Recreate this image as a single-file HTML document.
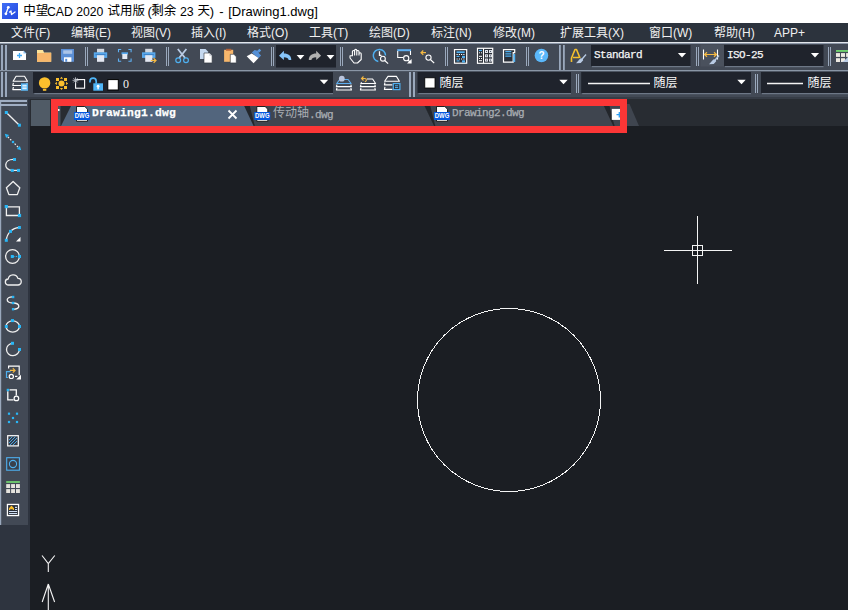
<!DOCTYPE html>
<html lang="zh-CN"><head><meta charset="utf-8"><title>ZWCAD</title>
<style>
*{box-sizing:border-box;margin:0;padding:0}
html,body{width:848px;height:610px;overflow:hidden;background:#1b1e23}
body{position:relative;font-family:"Liberation Sans","Noto Sans CJK SC",sans-serif;font-size:12px;color:#eee}
.abs,#app *{position:absolute}
#app{position:absolute;left:0;top:0;width:848px;height:610px;overflow:hidden}
#title{left:0;top:0;width:848px;height:23px;background:#fff}
#title .tt{left:23px;top:2px;width:320px;height:19px;color:#000}
#title .tt span{top:0;line-height:19px;white-space:pre;transform-origin:0 50%}
#title .tt .c{font-size:12.5px}
#title .tt .l{font-size:13px}
#title .t{left:23px;top:2px;font-size:13px;line-height:19px;color:#000;white-space:nowrap;transform-origin:0 50%;transform:scaleX(0.972)}
#menu{left:0;top:23px;width:848px;height:19px;background:#2c333d}
#menu span{top:1px;line-height:19px;font-size:12px;color:#f0f0f0;white-space:nowrap;transform-origin:0 50%}
#tbline1{left:0;top:42px;width:848px;height:2px;background:linear-gradient(#e2e6ec 0 50%,#8d98a8 50% 100%)}
#tb1{left:0;top:44px;width:848px;height:26px;background:#424955}
#tbline2{left:0;top:70px;width:848px;height:2px;background:linear-gradient(#8a96a6 0 50%,#4d5562 50% 100%)}
#tb2{left:0;top:72px;width:848px;height:25px;background:#424955}
.grip{width:2px;background:#5e6877}
.sep{width:1px;background:#6b7583}
.dd{background:#1f232b;border-bottom:2px solid #4c5563}
.mono{font-family:"Liberation Mono",monospace;font-size:10.5px;color:#f6f6f6;white-space:nowrap;letter-spacing:-0.3px;-webkit-text-stroke:0.25px currentColor}
.caret{width:0;height:0;border-left:4.5px solid transparent;border-right:4.5px solid transparent;border-top:5px solid #fff}
.cjk{font-size:12px;color:#fafafa;white-space:nowrap;line-height:14px}
#gap{left:0;top:97px;width:848px;height:2px;background:#363c46}
#tabbar{left:30px;top:99px;width:818px;height:27px;background:#282c32}
#left{left:0;top:99px;width:27.5px;height:426px;background:#424955}
#leftside{left:0;top:99px;width:30px;height:513px;background:#2e343f}
svg{overflow:visible}
</style></head><body><div id="app">

<div id="title"><svg style="left:2px;top:3px" width="16" height="16" viewBox="0 0 16 16"><defs><linearGradient id="ig" x1="0" y1="0" x2="1" y2="1"><stop offset="0" stop-color="#3f6ef5"/><stop offset="1" stop-color="#2548e0"/></linearGradient></defs><rect width="16" height="16" fill="url(#ig)"/><path d="M3.900 10.800L6.300 4.300M7.600 9L9 8L9.500 11.500L13 9" stroke="#fff" stroke-width="1.300" fill="none" stroke-linecap="round" stroke-linejoin="round"/><circle cx="3.900" cy="10.800" r="1.400" fill="#fff"/><circle cx="6.300" cy="4.300" r="1.400" fill="#fff"/></svg>
<span class="tt" id="ttext"><span class="c" style="left:0.3px">中望</span><span class="l" style="left:24.4px;transform:scaleX(0.94)">CAD 2020 </span><span class="c" style="left:84.400px">试用版 </span><span class="l" style="left:124.600px">(</span><span class="c" style="left:128.300px">剩余 </span><span class="l" style="left:156.9px;transform:scaleX(0.95)">23 </span><span class="c" style="left:174.5px">天</span><span class="l" style="left:186.7px">) </span><span class="l" style="left:196.2px">- </span><span class="l" style="left:205.2px">[Drawing1.dwg]</span></span></div>

<div id="menu">
<span style="left:11px">文件(F)</span><span style="left:71px">编辑(E)</span><span style="left:131px">视图(V)</span><span style="left:191px">插入(I)</span><span style="left:247px">格式(O)</span><span style="left:309px">工具(T)</span><span style="left:369px">绘图(D)</span><span style="left:431px">标注(N)</span><span style="left:493px">修改(M)</span><span style="left:560px">扩展工具(X)</span><span style="left:649px">窗口(W)</span><span style="left:714px">帮助(H)</span><span style="left:774px">APP+</span>
</div>
<div id="tbline1"></div>
<div id="tb1"><svg style="left:0;top:0" width="848" height="26" viewBox="0 44 848 26">
<rect x="1" y="45" width="2" height="25" fill="#9aa8bc"/><rect x="5" y="45" width="2" height="25" fill="#9aa8bc"/>
<path d="M12.5 50.5h11l3 3v7h-14z" fill="#fff" stroke="#2d323b" stroke-width="0.8"/><path d="M23.500 50.500v3h3z" fill="#8fc4f2"/><path d="M19.500 53v5M17 55.500h5" stroke="#3fa9f5" stroke-width="1.300"/>
<path d="M37 50h6l1 2.500h7.200v9.300h-14.200z" fill="#fbe29a"/><rect x="37" y="53" width="14.200" height="8.800" fill="#f7b76c"/>
<path d="M61 49h13v12.800h-11l-2-2z" fill="#5b8fd6"/><rect x="63.200" y="50.300" width="9" height="3.500" fill="#aac4e8"/><rect x="64" y="57.300" width="7.400" height="4.500" fill="#fff"/><rect x="65.200" y="58.800" width="2" height="3" fill="#5b8fd6"/>
<path d="M85.5 47V66M87.5 47V66" stroke="#9aa8bc" stroke-width="1"/>
<rect x="97.0" y="48.800" width="7.200" height="4" fill="#d3d8e0"/><rect x="93.8" y="52.300" width="13.400" height="5.600" fill="#58a8ec"/><rect x="95.39999999999999" y="54" width="10.200" height="1.300" fill="#3f83c8"/><rect x="97.0" y="55.200" width="7.200" height="6.600" fill="#e4e8f2"/>
<path d="M118.500 52.200v-2.700h2.700M128.400 49.500h2.700v2.700M131.100 58.600v2.700h-2.700M121.200 61.300h-2.700v-2.700" stroke="#5fb0f2" stroke-width="1.100" fill="none"/><rect x="121.500" y="52.300" width="6.500" height="2.200" fill="#58a8ec"/><rect x="122.300" y="54" width="5" height="5" fill="#e4e8f2"/>
<rect x="145.2" y="48.800" width="7.200" height="4" fill="#d3d8e0"/><rect x="142" y="52.300" width="13.400" height="5.600" fill="#58a8ec"/><rect x="143.6" y="54" width="10.200" height="1.300" fill="#3f83c8"/><rect x="145.2" y="55.200" width="7.200" height="6.600" fill="#e4e8f2"/>
<path d="M150.800 60.500h5M153.600 58.200l2.400 2.300l-2.400 2.300" stroke="#f5b942" stroke-width="1.200" fill="none"/>
<path d="M166.5 47V66M168.5 47V66" stroke="#9aa8bc" stroke-width="1"/>
<path d="M177.800 49l7.300 9M186.400 49l-7.300 9" stroke="#b9cbe4" stroke-width="1.800"/><circle cx="178.200" cy="60.300" r="2.400" fill="none" stroke="#4fb0f0" stroke-width="1.200"/><circle cx="186" cy="60.300" r="2.400" fill="none" stroke="#4fb0f0" stroke-width="1.200"/>
<path d="M200 49h5.500l2.700 2.700v7.200h-8.200z" fill="#c5d9f0"/><path d="M204 53h5.400l2.700 2.700v7.200h-8.100z" fill="#fff" stroke="#2d323b" stroke-width="0.600"/><path d="M209.400 53v2.700h2.700z" fill="#c9ced6"/>
<rect x="224.100" y="49.800" width="9.100" height="12" fill="#f7b76c"/><rect x="226" y="48.800" width="5.200" height="1.900" fill="#b5623a"/><path d="M230.300 54.300h3.600l2.400 2.400v6.200h-6z" fill="#fff" stroke="#2d323b" stroke-width="0.600"/>
<path d="M259.400 48.700l1.800 1.700l-2 2.200l-1.800-1.800z" fill="#5a9be0"/><path d="M251.800 52.600L254.600 49.900L258.500 51L258.900 53.200L261.100 55.500L258.400 58.200Z" fill="#5590d6"/><path d="M251.700 53.500L258.500 58L253.500 63.300L246.700 56.300Z" fill="#fff"/>
<path d="M271.5 47V66M273.5 47V66" stroke="#9aa8bc" stroke-width="1"/>
<rect x="276" y="45" width="60" height="22.500" fill="#1f232c"/>
<path transform="translate(279,50.800)" d="M0 4.900L4.900 0V2.700C9.500 2.700 12.300 5 12.300 9.200L9.700 9.200C9.200 7.300 8 6.500 4.900 6.500V9.200Z" fill="#86c4fa"/>
<polygon points="296.65,54.900000000000006 304.35,54.900000000000006 300.5,59.5" fill="#fff"/>
<path transform="translate(321.100,50.800) scale(-1,1)" d="M0 4.900L4.900 0V2.700C9.500 2.700 12.300 5 12.300 9.200L9.700 9.200C9.200 7.300 8 6.500 4.900 6.500V9.200Z" fill="#b0b0b0"/>
<polygon points="326.65,54.900000000000006 334.35,54.900000000000006 330.5,59.5" fill="#fff"/>
<path d="M340.5 47V66M342.5 47V66" stroke="#9aa8bc" stroke-width="1"/>
<path d="M350 55.800H352.400V51.600Q352.400 50.500 353.500 50.500Q354.600 50.500 354.600 51.600V50.500Q354.600 49.400 355.700 49.400Q356.800 49.400 356.800 50.500V51.600Q356.800 50.500 357.900 50.500Q359 50.500 359 51.600V53.800Q359 52.800 360.100 52.800Q361.200 52.800 361.200 53.800V59.500L357.500 63H354L350 58ZM354.600 51.600V55.500M356.800 51.600V55.500M359 53.800V55.500" fill="none" stroke="#fff" stroke-width="1.100" stroke-linejoin="round"/>
<path d="M385.500 55.400A6.100 6.100 0 1 0 378.300 61.500" fill="none" stroke="#4fb0f0" stroke-width="1.500"/><path d="M379.500 51.200v4.200h2" stroke="#fff" stroke-width="1.300" fill="none"/><circle cx="382.900" cy="58.700" r="2.400" fill="#424955" stroke="#fff" stroke-width="1.100"/><path d="M384.700 60.500l3.400 3.100" stroke="#fff" stroke-width="1.200"/><rect x="397.200" y="49.200" width="13.800" height="2" fill="#5fb0f2"/><path d="M397.700 51v6.500h5.500M410.500 51v4" stroke="#fff" stroke-width="1.100" fill="none"/><circle cx="406.200" cy="58.200" r="2.600" fill="none" stroke="#fff" stroke-width="1.100"/><path d="M408 60l2 2" stroke="#fff" stroke-width="1.200"/><path d="M411.600 59v4.600h-4.600z" fill="#fff"/>
<path d="M421 52.700h5M423.300 50.500l-2.300 2.200l2.300 2.200" stroke="#f5b942" stroke-width="1.200" fill="none"/><circle cx="428.500" cy="57.600" r="2.600" fill="none" stroke="#fff" stroke-width="1.100"/><path d="M430.400 59.500l3.800 3.600" stroke="#fff" stroke-width="1.200"/>
<path d="M445.5 47V66M447.5 47V66" stroke="#9aa8bc" stroke-width="1"/>
<rect x="454.500" y="49.600" width="12.200" height="13.600" fill="#2a2f38" stroke="#fff" stroke-width="1.200"/><rect x="456.500" y="51.300" width="8.200" height="1.800" fill="#4fb0f0"/><g fill="#4fb0f0"><rect x="456.500" y="55.800" width="3" height="1.200"/><rect x="462" y="55.800" width="3" height="2.200"/><rect x="456.500" y="60.300" width="3" height="1.200"/><rect x="462" y="60.300" width="3" height="2.200"/></g><g fill="#fff"><rect x="456.500" y="54" width="1.200" height="1"/><rect x="458.800" y="54" width="1.200" height="1"/><rect x="461" y="54" width="1.200" height="1"/><rect x="463.300" y="54" width="1.200" height="1"/><rect x="456.500" y="58.500" width="1.200" height="1"/><rect x="458.800" y="58.500" width="1.200" height="1"/><rect x="461" y="58.500" width="1.200" height="1"/><rect x="463.300" y="58.500" width="1.200" height="1"/></g>
<rect x="477.500" y="48.300" width="15.200" height="15" fill="#2a2f38" stroke="#fff" stroke-width="1.200"/><path d="M483.500 48.300v15" stroke="#fff" stroke-width="1.100"/><rect x="479" y="49.800" width="3" height="1.300" fill="#4fb0f0"/><g fill="#fff"><rect x="479" y="52.300" width="1" height="1"/><rect x="481" y="52.300" width="1" height="1"/><rect x="479" y="55.800" width="3" height="1"/><rect x="479" y="58" width="1" height="1"/><rect x="481" y="58" width="1" height="1"/><rect x="479" y="60.200" width="3" height="1"/></g><g fill="#dfe3ea"><rect x="485" y="50" width="3" height="3"/><rect x="489" y="50" width="3" height="3"/><rect x="485" y="54.300" width="3" height="3"/><rect x="489" y="54.300" width="3" height="3"/><rect x="485" y="58.600" width="3" height="3"/><rect x="489" y="58.600" width="3" height="3"/></g><g fill="#4a5261"><rect x="486" y="51" width="1" height="1"/><rect x="490" y="51" width="1" height="1"/><rect x="486" y="55.300" width="1" height="1"/><rect x="490" y="55.300" width="1" height="1"/><rect x="486" y="59.600" width="1" height="1"/><rect x="490" y="59.600" width="1" height="1"/></g>
<path d="M503.500 49.600h11.200v3h-1.500v9.600h-9.700z" fill="#2a2f38" stroke="#fff" stroke-width="1.200"/><path d="M505.300 51.700h6M505.300 53.900h6M505.300 56.100h6" stroke="#4fb0f0" stroke-width="1.200"/><rect x="513.400" y="54" width="1.800" height="8" fill="#4fb0f0"/>
<path d="M526.5 47V66M528.5 47V66" stroke="#9aa8bc" stroke-width="1"/>
<circle cx="541.450" cy="55.450" r="6.800" fill="#5ab7fa"/><text x="541.500" y="59.200" font-family="Liberation Sans, sans-serif" font-weight="bold" font-size="10" fill="#fff" text-anchor="middle">?</text>
<rect x="559" y="45" width="1.800" height="25" fill="#9aa8bc"/><rect x="563" y="45" width="1.800" height="25" fill="#9aa8bc"/>
<path d="M571.500 62v-4l3.500-8.500h1.500l3.500 8.500M573 57.500h6" fill="none" stroke="#f5c02d" stroke-width="1.600" stroke-linejoin="round"/><path d="M585.600 54l.9.900l-3.600 4.300l.3 1l-2.500 2.800l-4.700.3l4.300-4.700l1.500-.3z" fill="#b9cbe4"/>
<rect x="591" y="45" width="99.500" height="21" fill="#1f232c"/><rect x="592" y="66" width="98.500" height="1.200" fill="#6d7786"/>
<polygon points="677.9,52.900000000000006 686.1,52.900000000000006 682,57.5" fill="#fff"/>
<path d="M696.5 47V66M698.5 47V66" stroke="#9aa8bc" stroke-width="1"/>
<rect x="700.500" y="44.500" width="23.500" height="22" fill="#4a515d"/><path d="M703.500 49.500v10M717.500 49.500v10" stroke="#fff" stroke-width="1.100"/><path d="M704.500 54.500h12M707 52.300l-2.500 2.200l2.500 2.200M714 52.300l2.500 2.200l-2.500 2.200" stroke="#f5b942" stroke-width="1.200" fill="none"/><path d="M718.600 55l.9.900l-3.600 4.300l.3 1l-2.500 2.800l-4.700.3l4.300-4.700l1.500-.3z" fill="#b9cbe4"/>
<rect x="724" y="45" width="99.500" height="21" fill="#1f232c"/><rect x="725" y="66" width="98.500" height="1.200" fill="#6d7786"/>
<polygon points="810.9,52.900000000000006 819.1,52.900000000000006 815,57.5" fill="#fff"/>
<path d="M828.5 47V66M830.5 47V66" stroke="#9aa8bc" stroke-width="1"/>
<rect x="836" y="50" width="14" height="1.900" fill="#6fcf6f"/><g fill="#ece9e2"><rect x="836" y="53.100" width="4" height="3.800"/><rect x="841" y="53.100" width="4" height="3.800"/><rect x="846.100" y="53.100" width="4" height="3.800"/><rect x="836" y="58.200" width="4" height="3.800"/><rect x="841" y="58.200" width="4" height="3.800"/></g><path d="M848 57l-4.500 4.200l-1.800 .900h6.300z" fill="#b9cbe4"/></svg>
<span class="mono" style="left:594px;top:5px;font-size:11px;letter-spacing:-0.6px;line-height:12px" id="std">Standard</span>
<span class="mono" style="left:727px;top:5px;font-size:11px;letter-spacing:-0.6px;line-height:12px" id="iso">ISO-25</span></div>
<div id="tbline2"></div>
<div id="tb2"><svg style="left:0;top:0" width="848" height="25" viewBox="0 72 848 25">
<rect x="1" y="72" width="2" height="25" fill="#9aa8bc"/><rect x="5" y="72" width="2" height="25" fill="#9aa8bc"/>
<path d="M16.1 76.3h8.400l3 5h-14.400z" fill="none" stroke="#fff" stroke-width="1.100" stroke-linejoin="round"/><path d="M13.4 82.89999999999999l-.6 2.600h14.600l-.6-2.600M13.4 87.0l-.6 2.600h14.600l-.6-2.600" fill="none" stroke="#fff" stroke-width="1.100" stroke-linejoin="round"/>
<rect x="21" y="83.300" width="7" height="7.400" fill="#4fb0f0"/><path d="M22.300 85.300h4.400M22.300 87h4.400M22.300 88.700h4.400" stroke="#fff" stroke-width="1"/>
<rect x="33" y="72" width="300" height="21" fill="#1f232c"/><rect x="34.300" y="93" width="298.700" height="1.200" fill="#6d7786"/>
<circle cx="44.600" cy="82.900" r="5.700" fill="#fbc02d"/><rect x="42.900" y="89" width="3.400" height="1.800" fill="#fbc02d"/>
<g fill="#fbc02d"><circle cx="61.500" cy="83.400" r="3"/><rect x="56" y="78" width="3" height="3"/><rect x="64" y="78" width="3" height="3"/><rect x="56" y="86" width="3" height="3"/><rect x="64" y="86" width="3" height="3"/><path d="M61.500 76.800l1.600 2h-3.200zM61.500 90l1.600-2h-3.200zM54.900 83.400l2-1.600v3.200zM68.100 83.400l-2-1.600v3.200z"/></g>
<rect x="75.600" y="79.600" width="9" height="8.600" fill="none" stroke="#fff" stroke-width="1.100"/><path d="M72.500 80.300h6M75.500 77.300v6M73.400 78.200l4.200 4.200M77.600 78.200l-4.200 4.200" stroke="#b8bcc4" stroke-width="0.900"/>
<path d="M90 82.500v-1.300a3.100 3.100 0 0 1 6.200 0v2.500" fill="none" stroke="#4fb5f7" stroke-width="1.700"/><rect x="93.300" y="83.300" width="9.700" height="7.400" fill="#4fb5f7"/><circle cx="98.100" cy="86.200" r="1.400" fill="#fff"/><rect x="97.400" y="86.500" width="1.400" height="2.800" fill="#fff"/>
<rect x="107.800" y="79.600" width="10.500" height="10.400" fill="#fff" stroke="#000" stroke-width="1"/>
<polygon points="319.8,79.8 328.2,79.8 324,84.2" fill="#fff"/>
<path d="M339.700 79.500h8.400l3 4h-14.400z" fill="none" stroke="#5fb0f2" stroke-width="1.100" stroke-linejoin="round"/><path d="M337 84.600l-.6 2h15l-.6-2M337 88l-.6 2h15l-.6-2" fill="none" stroke="#fff" stroke-width="1.100" stroke-linejoin="round"/><circle cx="341.800" cy="78.700" r="2.900" fill="#b9c4dc"/>
<path d="M367 79h5.600l3 4.500h-14.800l.8-1.200" fill="none" stroke="#fff" stroke-width="1.100" stroke-linejoin="round"/><path d="M361 84.600l-.6 2h15l-.6-2M361 88l-.6 2h15l-.6-2" fill="none" stroke="#fff" stroke-width="1.100" stroke-linejoin="round"/><path d="M361.500 78.500h3.300a1.600 1.600 0 0 1 0 3.200M363.500 76.500l-2 2l2 2" fill="none" stroke="#f5b942" stroke-width="1.100"/>
<path d="M388 76.400h8.400l3 4.800h-14.800z" fill="none" stroke="#fff" stroke-width="1.100" stroke-linejoin="round"/><path d="M385 82.500l-.6 2.400h8M385 86.800l-.6 2.600h8" fill="none" stroke="#fff" stroke-width="1.100" stroke-linejoin="round"/><rect x="393.300" y="83.600" width="6.600" height="6" fill="#2a2f38" stroke="#4fb0f0" stroke-width="1.200"/><path d="M395 85.800h3.200M395 87.600h3.200" stroke="#4fb0f0" stroke-width="1"/>
<rect x="409" y="72" width="2" height="25" fill="#9aa8bc"/><rect x="413" y="72" width="2" height="25" fill="#9aa8bc"/>
<rect x="417.500" y="72" width="153.500" height="21" fill="#1f232c"/><rect x="418.500" y="93" width="152.500" height="1.200" fill="#6d7786"/>
<rect x="424.800" y="77.800" width="10.200" height="10.200" fill="#fff" stroke="#000" stroke-width="0.800"/>
<polygon points="559.3,79.8 567.7,79.8 563.5,84.2" fill="#fff"/>
<path d="M576.5 74V93M578.5 74V93" stroke="#9aa8bc" stroke-width="1"/>
<rect x="581.200" y="72" width="169.800" height="21" fill="#1f232c"/><rect x="582.200" y="93" width="168.800" height="1.200" fill="#6d7786"/>
<path d="M588 83.500h62" stroke="#f4f4f4" stroke-width="1.300"/>
<polygon points="737.3,79.8 745.7,79.8 741.5,84.2" fill="#fff"/>
<path d="M755.5 74V93M757.5 74V93" stroke="#9aa8bc" stroke-width="1"/>
<rect x="761" y="72" width="90" height="21" fill="#1f232c"/><rect x="762" y="93" width="90" height="1.200" fill="#6d7786"/>
<path d="M767 83.500h36" stroke="#f4f4f4" stroke-width="1.300"/>
</svg>
<span style="left:123px;top:6px;font-family:'Liberation Serif',serif;font-size:12px;line-height:12px;color:#f4f4f4" id="zero">0</span>
<span class="cjk" style="left:439.500px;top:4px">随层</span>
<span class="cjk" style="left:653.500px;top:4px">随层</span>
<span class="cjk" style="left:807.500px;top:4px">随层</span></div>
<div id="gap"></div>
<div id="leftside"></div>
<div id="left"><svg style="left:0;top:-2px" width="31" height="428" viewBox="0 97 31 428">
<rect x="0" y="100" width="1.200" height="425" fill="#9aa8bc"/>
<rect x="0" y="100" width="27" height="2" fill="#a0aec3"/><rect x="0" y="104" width="27" height="2" fill="#a0aec3"/>
<path d="M6.300 112.500L19.400 125.200" stroke="#f0f0f0" stroke-width="1.300" fill="none"/><rect x="4.80" y="111.00" width="3" height="3" fill="#29b6f6"/><rect x="17.90" y="123.70" width="3" height="3" fill="#29b6f6"/>
<path d="M7.800 136.800L18.200 147.200" stroke="#f0f0f0" stroke-width="1.200" stroke-dasharray="1.700 1.500"/><path d="M4.800 133.800l4.300 1.300l-3 3zM21.200 150.200l-4.300-1.300l3-3z" fill="#29b6f6"/><rect x="11.900" y="140.900" width="2.200" height="2.200" fill="#29b6f6"/><path d="M14.500 159.500C3.200 158.700 3.200 170.400 12.300 170.400H18.500" stroke="#f0f0f0" stroke-width="1.300" fill="none"/><rect x="13.00" y="158.00" width="3" height="3" fill="#29b6f6"/><rect x="10.80" y="168.90" width="3" height="3" fill="#29b6f6"/><rect x="17.00" y="168.90" width="3" height="3" fill="#29b6f6"/>
<path d="M13.100 181.500L19.800 187.700L17.300 194.600H8.900L6.400 187.700Z" stroke="#f0f0f0" stroke-width="1.300" fill="none" stroke-linejoin="round"/>
<path d="M6.400 206.800H19.400V215.500H6.400Z" stroke="#f0f0f0" stroke-width="1.300" fill="none"/><rect x="4.70" y="205.00" width="3.2" height="3.2" fill="#29b6f6"/><rect x="17.90" y="213.90" width="3.2" height="3.2" fill="#29b6f6"/>
<path d="M6.300 240.300C7 233 12 228 19.400 227.500" stroke="#f0f0f0" stroke-width="1.300" fill="none"/><rect x="4.80" y="238.80" width="3" height="3" fill="#29b6f6"/><rect x="9.00" y="229.90" width="3" height="3" fill="#29b6f6"/><rect x="17.90" y="226.00" width="3" height="3" fill="#29b6f6"/><path d="M20.500 237v4.500h-4.500z" fill="#fff"/>
<circle cx="12.500" cy="256.500" r="6.900" stroke="#f0f0f0" stroke-width="1.300" fill="none"/><path d="M13 256.500h6" stroke="#29b6f6" stroke-width="1" stroke-dasharray="1.500 1.200"/><rect x="10.80" y="255.00" width="3" height="3" fill="#29b6f6"/><rect x="18.00" y="255.00" width="3" height="3" fill="#29b6f6"/>
<path d="M8.500 285a3 3 0 0 1-.300-6a5 5 0 0 1 9.700-.600a3.300 3.300 0 0 1 .100 6.600z" stroke="#f0f0f0" stroke-width="1.300" fill="none" stroke-linejoin="round"/>
<path d="M13.100 297C5 296.500 5.500 303 13 303C20.500 303 21 309.500 13.100 309.300" stroke="#f0f0f0" stroke-width="1.300" fill="none"/><rect x="11.90" y="295.80" width="2.4" height="2.4" fill="#29b6f6"/><rect x="11.90" y="301.80" width="2.4" height="2.4" fill="#29b6f6"/><rect x="11.90" y="308.00" width="2.4" height="2.4" fill="#29b6f6"/>
<ellipse cx="12.700" cy="326.500" rx="6.700" ry="5.600" stroke="#f0f0f0" stroke-width="1.300" fill="none"/><rect x="11.00" y="319.10" width="3" height="3" fill="#29b6f6"/><rect x="4.80" y="325.00" width="3" height="3" fill="#29b6f6"/><rect x="18.00" y="325.00" width="3" height="3" fill="#29b6f6"/>
<path d="M12.500 343.300A6.400 6.200 0 1 0 19.300 349.500" stroke="#f0f0f0" stroke-width="1.300" fill="none"/><rect x="11.00" y="341.80" width="3" height="3" fill="#29b6f6"/><rect x="18.00" y="348.00" width="3" height="3" fill="#29b6f6"/>
<path d="M8.600 368.600V366.100H19.200V375.200M15 376.400H17.400" stroke="#fff" stroke-width="1.200" fill="none"/><path d="M9.800 370.400h5.200M12.800 368.200l2.300 2.200l-2.300 2.200" stroke="#f5b942" stroke-width="1.100" fill="none"/><path d="M10.500 371.600H6.500V377.500H7.900" stroke="#4fb0f0" stroke-width="1.200" fill="none"/><circle cx="11.300" cy="376.400" r="2.100" stroke="#fff" stroke-width="1.200" fill="none"/><path d="M21 374.800v4.700h-4.800z" fill="#fff"/><path d="M9.500 389.900H16.300V395.600M7.800 391.200V399.800H13.600" stroke="#fff" stroke-width="1.300" fill="none"/><circle cx="16.400" cy="398.400" r="2.300" stroke="#fff" stroke-width="1.200" fill="none"/><rect x="6.700" y="388.800" width="2.400" height="2.400" fill="#29b6f6"/><rect x="7.90" y="412.60" width="2.2" height="2.2" fill="#29b6f6"/><rect x="15.90" y="412.60" width="2.2" height="2.2" fill="#29b6f6"/><rect x="11.90" y="416.90" width="2.2" height="2.2" fill="#29b6f6"/><rect x="7.90" y="420.90" width="2.2" height="2.2" fill="#29b6f6"/><rect x="15.90" y="420.90" width="2.2" height="2.2" fill="#29b6f6"/>
<rect x="7.700" y="435.700" width="10.600" height="10.200" fill="#353c48" stroke="#fff" stroke-width="1.200"/><path d="M9 440l3.500-3.500M9 443l6.500-6.500M10 445l7-7M13 445l4-4" stroke="#4fb0f0" stroke-width="0.900"/>
<rect x="6.700" y="457.700" width="12.700" height="12.500" fill="#39404c" stroke="#4fb0f0" stroke-width="1.100"/><circle cx="13" cy="464" r="3.600" fill="none" stroke="#4fb0f0" stroke-width="1.100"/>
<rect x="6.200" y="481.100" width="13.700" height="1.800" fill="#6fcf6f"/><g fill="#e6e4de"><rect x="6.200" y="484.100" width="3.900" height="3.900"/><rect x="11.100" y="484.100" width="3.900" height="3.900"/><rect x="16" y="484.100" width="3.900" height="3.900"/><rect x="6.200" y="489.100" width="3.900" height="3.900"/><rect x="11.100" y="489.100" width="3.900" height="3.900"/><rect x="16" y="489.100" width="3.900" height="3.900"/></g>
<rect x="7.450" y="504.450" width="11.100" height="11.100" fill="#2a2f38" stroke="#fff" stroke-width="1.300"/><path d="M9.600 510v-1.600l1.900-2l1.900 2v1.600M10.300 508.600h2.400" fill="none" stroke="#fbc02d" stroke-width="1.200" stroke-linejoin="round"/><path d="M15 507.400h2.100M15 509.500h2.100M9 511.500h8.100M9 513.500h8.100" stroke="#cfe0f5" stroke-width="1.100"/></svg></div>
<div id="tabbar">
<div style="left:1px;top:1px;width:19.300px;height:26px;background:#505b66"></div>
<svg style="left:0;top:0" width="818" height="27" viewBox="30 99 818 27">
<rect x="58" y="100" width="2.5" height="26" fill="#4b5560"/>
<rect x="58" y="109" width="1.5" height="2" fill="#fff"/>
<polygon points="61,126 72.5,103 243.5,103 255,126" fill="#52657d"/>
<polygon points="255,126 243.5,103 423,103 434.5,126" fill="#3f454f"/>
<polygon points="434.5,126 423,103 603.5,103 615,126" fill="#3f454f"/>

<polygon points="615,126 604,104 629.500,104 639,126" fill="#3f454f"/><polygon points="242.8,103 249.05,103 254.8,126 253.60000000000002,126" fill="#23262b"/><polygon points="423.3,103 429.55,103 435.3,126 434.1,126" fill="#23262b"/><polygon points="602.5,103 608.75,103 614.5,126 613.3,126" fill="#23262b"/>
<rect x="611.800" y="108.900" width="12" height="11" fill="#fff"/>
<path d="M619.300 112v5.500M616.500 114.700h5.500" stroke="#2a9df4" stroke-width="1.300"/>
<g id="dwg1"><path d="M76.500 106.500h8.300l2.700 2.700v12.100h-11z" fill="#fff" stroke="#111" stroke-width="0.900"/><rect x="74" y="112" width="16" height="8" fill="#0558de"/></g>
<g transform="translate(180.300,0)"><path d="M76.500 106.500h8.300l2.700 2.700v12.100h-11z" fill="#fff" stroke="#111" stroke-width="0.900"/><rect x="74" y="112" width="16" height="8" fill="#0558de"/></g>
<g transform="translate(360,0)"><path d="M76.500 106.500h8.300l2.700 2.700v12.100h-11z" fill="#fff" stroke="#111" stroke-width="0.900"/><rect x="74" y="112" width="16" height="8" fill="#0558de"/></g>
<g font-family="Liberation Sans, sans-serif" font-size="7.300" font-weight="bold" fill="#fff" text-anchor="middle"><text x="82" y="118.400" textLength="14.500" lengthAdjust="spacingAndGlyphs">DWG</text><text x="262.300" y="118.400" textLength="14.500" lengthAdjust="spacingAndGlyphs">DWG</text><text x="442" y="118.400" textLength="14.500" lengthAdjust="spacingAndGlyphs">DWG</text></g>
<path d="M228.500 110.500l8 8M236.500 110.500l-8 8" stroke="#fff" stroke-width="1.800"/>
</svg>
<span class="mono" style="left:62px;top:6.500px;font-size:11.3px;font-weight:bold;color:#fff;line-height:14px;letter-spacing:0.22px" id="tab1">Drawing1.dwg</span>
<span style="left:243px;top:7px;font-size:12px;color:#a9adb3;line-height:14px;white-space:nowrap" id="tab2"><span style="position:static;font-family:'Noto Sans CJK SC',sans-serif;font-size:12px;letter-spacing:0px;position:relative;top:-1.5px">传动轴</span><span class="mono" style="position:static;font-size:11px;color:#a9adb3;letter-spacing:-0.6px">.dwg</span></span>
<span class="mono" style="left:422px;top:7px;font-size:11px;color:#a9adb3;line-height:14px;letter-spacing:-0.6px" id="tab3">Drawing2.dwg</span>
</div>

<svg style="left:0;top:0" width="848" height="610" viewBox="0 0 848 610">
<circle cx="509" cy="400" r="91.5" fill="none" stroke="#f4f4f4" stroke-width="1" shape-rendering="crispEdges"/>
<g stroke="#f4f4f4" stroke-width="1" fill="none" shape-rendering="crispEdges">
<path d="M664 250.5H732M697.5 216V284"/><rect x="692.5" y="245.5" width="10" height="10"/>
</g>
<g stroke="#f4f4f4" stroke-width="1.1" fill="none">
<path d="M42 555.5L48.3 563.5L54.8 555.5M48.3 563.5V572"/>
<path d="M48.3 584V610M48.3 584L42.2 602M48.3 584L54.6 602"/>
</g>
</svg>
<div id="red" style="left:51px;top:99px;width:576px;height:34px;border:7px solid #fb3636"></div>

</div></body></html>
